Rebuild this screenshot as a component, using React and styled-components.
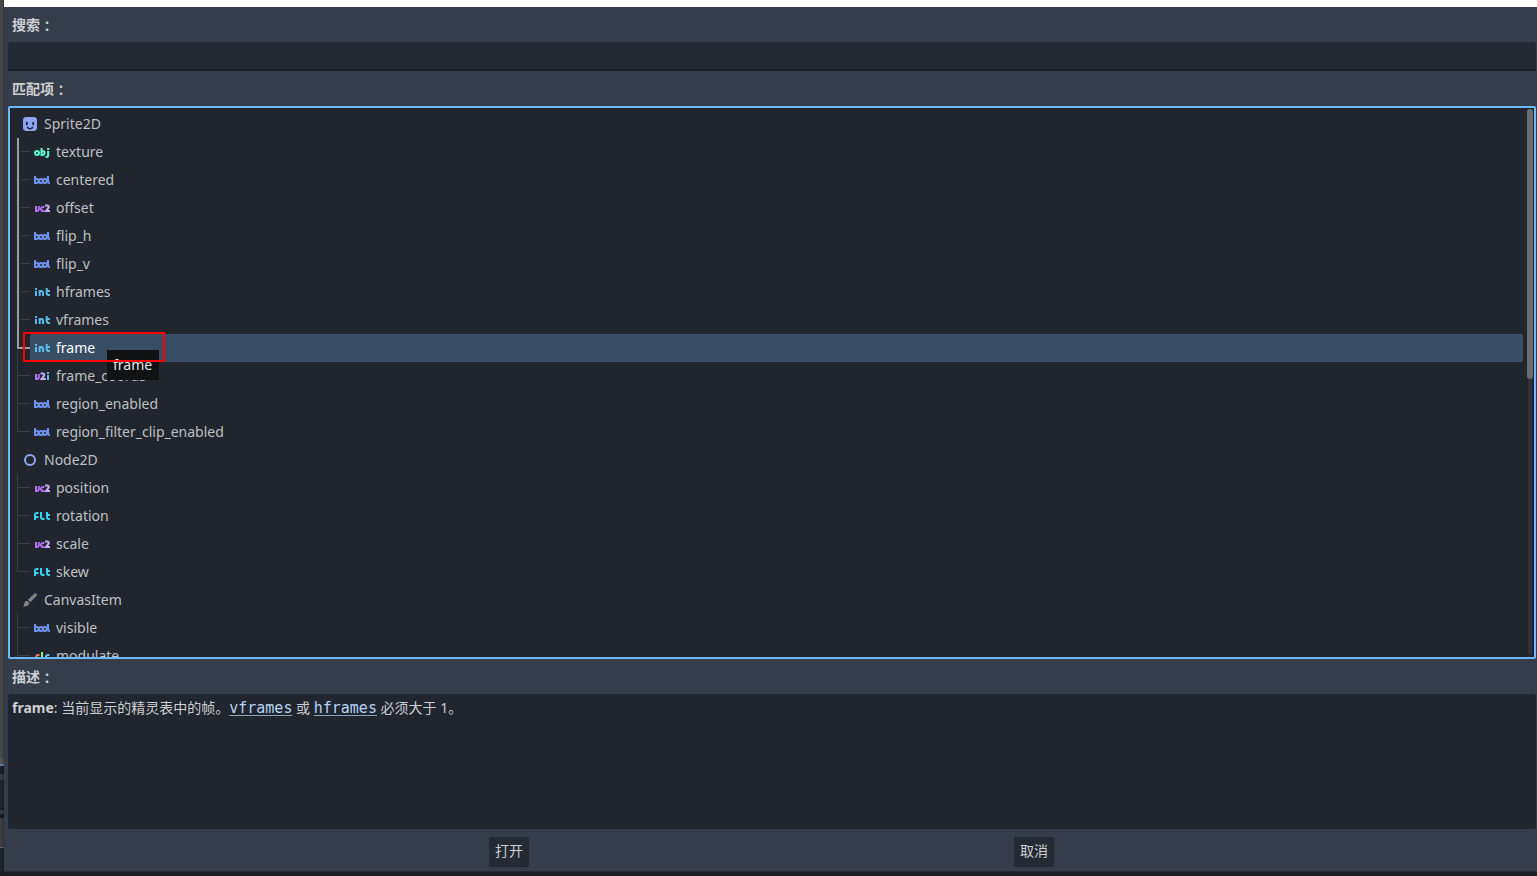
import React from 'react';
import styled, { createGlobalStyle } from 'styled-components';

const GlobalStyle = createGlobalStyle`
  * {
    box-sizing: border-box;
  }
  body {
    margin: 0;
    overflow: hidden;
    background: #1b1e26;
    color: #cdcfd2;
    font-family: 'Noto Sans', 'Noto Sans CJK SC', sans-serif;
    font-size: 14px;
  }
`;

const purple = '#ac73f1';
const lilac = '#cba6f7';

const icons = {
  sprite: (
    <>
      <rect x="1" y="1" width="14" height="14" rx="3.4" fill="#8da5f3" />
      <path d="M4.800 6.800v1.400M11.200 6.800v1.400" stroke="#21252e" strokeWidth="1.9" strokeLinecap="round" />
      <path d="M5.500 11.200c.4 1.100 1.300 1.500 2.500 1.500s2.100-.4 2.500-1.500" fill="none" stroke="#21252e" strokeWidth="1.5" strokeLinecap="round" />
    </>
  ),
  node: <circle cx="8" cy="8" r="5" fill="none" stroke="#8da5f3" strokeWidth="2" />,
  brush: (
    <g fill="#848484">
      <path d="M12.2 1.7a1.6 1.6 0 0 1 2.3 2.3L8.3 10.2 5.9 7.8z" />
      <path d="M5.1 8.800l2.300 2.300c-.2 2.400-3 3.700-6.400 3.600 1.300-1 .9-2.200 1.500-3.900.5-1.200 1.400-1.900 2.600-2z" />
    </g>
  ),
  obj: (
    <g fill="none" stroke="#5ff2d2" strokeWidth="2.1">
      <circle cx="3" cy="9" r="2" />
      <path d="M7.500 4v7h1a2 2 0 0 0 0-4h-1" />
      <path d="M14.200 4v2M14.200 7v4a2 2 0 0 1-2 2h-.7" />
    </g>
  ),
  bool: (
    <g fill="none" stroke="#6f91f0" strokeWidth="2.1">
      <path d="M1 4v7h1.600a2 2 0 0 0 0-4H1" />
      <circle cx="7" cy="9" r="2" />
      <circle cx="10.900" cy="9" r="2" />
      <path d="M14 4v5a2 2 0 0 0 2 2" />
    </g>
  ),
  int: (
    <path
      fill="#5abbef"
      d="M1 4v2h2V4zm0 3v5h2V7zm10.700-3v5a3 3 0 0 0 3 3H16v-2h-1.300a1 1 0 0 1-1-1V8H16V6h-2.300V4zM4.700 12h2V8h.3a1 1 0 0 1 1 1v3h2V9a3 3 0 0 0-3-3H4.700z"
    />
  ),
  flt: (
    <path
      fill="#35d4f4"
      d="M3 4a3 3 0 0 0-3 3v5h2v-2h2.500V8H2V7a1 1 0 0 1 1-1h1.500V4zM6 4v5a3 3 0 0 0 3 3h1.500v-2H9a1 1 0 0 1-1-1V4zM12 4v5a3 3 0 0 0 3 3h1v-2h-1a1 1 0 0 1-1-1V8h2V6h-2V4z"
    />
  ),
  vc2: (
    <>
      <path fill={purple} d="M1 6v6h1.800a3 3 0 0 0 3-3V6h-2v3a1 1 0 0 1-.8 1V6zM9 6a3 3 0 0 0 0 6h1.400v-2H9a1 1 0 0 1 0-2h1.400V6z" />
      <path d="M11 5.500h2.200a1.500 1.500 0 0 1 1.200 2.400L12.200 11H16" fill="none" stroke={lilac} strokeWidth="2.100" />
    </>
  ),
  v2i: (
    <>
      <path fill={purple} d="M1 6v6h1.800a3 3 0 0 0 3-3V6h-2v3a1 1 0 0 1-.8 1V6z" />
      <path d="M6.500 5.500h2.200a1.500 1.500 0 0 1 1.200 2.400L7.700 11h4.300" fill="none" stroke={lilac} strokeWidth="2.100" />
      <path d="M13 4v2h2V4zm0 3v5h2V7z" fill="#5abbef" />
    </>
  ),
  clr: (
    <g fill="none" strokeWidth="2">
      <path d="M5.500 7H4.200a2 2 0 0 0 0 4h1.300" stroke="#ff7070" />
      <path d="M8 4v5a2 2 0 0 0 2 2h.5" stroke="#7aff70" />
      <path d="M12 12V9a2 2 0 0 1 2-2h1.500" stroke="#70bafa" />
    </g>
  ),
};

const tree = [
  { name: 'Sprite2D', icon: 'sprite', root: true },
  { name: 'texture', icon: 'obj', guide: 'lit' },
  { name: 'centered', icon: 'bool', guide: 'lit' },
  { name: 'offset', icon: 'vc2', guide: 'lit' },
  { name: 'flip_h', icon: 'bool', guide: 'lit' },
  { name: 'flip_v', icon: 'bool', guide: 'lit' },
  { name: 'hframes', icon: 'int', guide: 'lit' },
  { name: 'vframes', icon: 'int', guide: 'lit' },
  { name: 'frame', icon: 'int', guide: 'selected' },
  { name: 'frame_coords', icon: 'v2i', guide: 'dim' },
  { name: 'region_enabled', icon: 'bool', guide: 'dim' },
  { name: 'region_filter_clip_enabled', icon: 'bool', guide: 'last' },
  { name: 'Node2D', icon: 'node', root: true },
  { name: 'position', icon: 'vc2', guide: 'dim' },
  { name: 'rotation', icon: 'flt', guide: 'dim' },
  { name: 'scale', icon: 'vc2', guide: 'dim' },
  { name: 'skew', icon: 'flt', guide: 'last' },
  { name: 'CanvasItem', icon: 'brush', root: true },
  { name: 'visible', icon: 'bool', guide: 'dim' },
  { name: 'modulate', icon: 'clr', guide: 'dim' },
];

const dimLine = '#3a3e46';
const litLine = '#9c9ea1';

const guides = {
  lit: (
    <>
      <path d="M0 0h2v28H0z" fill={litLine} />
      <path d="M4 13h9v1H4z" fill={dimLine} />
    </>
  ),
  selected: (
    <>
      <path d="M0 0h2v13h11v2H0z" fill={litLine} />
      <path d="M0 17h1v11H0z" fill={dimLine} />
    </>
  ),
  dim: <path d="M0 0h1v13h12v1H1v14H0z" fill={dimLine} />,
  last: <path d="M0 0h1v13h12v1H0z" fill={dimLine} />,
};

function TreeItem({ item }) {
  const { name, icon, root, guide } = item;
  return (
    <Row>
      {!root && (
        <Guide width="13" height="28" shapeRendering="crispEdges">
          {guides[guide]}
        </Guide>
      )}
      <Cell $root={root} $selected={guide === 'selected'}>
        <Icon viewBox="0 0 16 16">{icons[icon]}</Icon>
        <Name>{name}</Name>
      </Cell>
    </Row>
  );
}

function Label({ children }) {
  return (
    <LabelText>
      <span>{children}</span>
      <Colon>：</Colon>
    </LabelText>
  );
}

export default function App() {
  return (
    <Screen>
      <GlobalStyle />
      <Backdrop />
      <Window>
        <TitleStrip />
        <Dialog>
          <Label>搜索</Label>
          <SearchInput />
          <Label>匹配项</Label>
          <TreeBox>
            <Rows>
              {tree.map((item) => (
                <TreeItem key={item.name} item={item} />
              ))}
            </Rows>
            <ScrollTrack>
              <ScrollGrabber />
            </ScrollTrack>
          </TreeBox>
          <Label>描述</Label>
          <Description>
            <b>frame</b>: 当前显示的精灵表中的帧。<Code>vframes</Code> 或 <Code>hframes</Code> 必须大于 1。
          </Description>
          <Buttons>
            <Button>打开</Button>
            <Button>取消</Button>
          </Buttons>
        </Dialog>
      </Window>
      <Tooltip>frame</Tooltip>
      <Highlight />
    </Screen>
  );
}

const Screen = styled.div`
  position: relative;
  display: flex;
  width: 1537px;
  height: 876px;
  overflow: hidden;
`;

const Backdrop = styled.div`
  width: 4px;
  background: linear-gradient(90deg, transparent 50%, rgba(0, 0, 0, 0.25)),
    linear-gradient(
      #484848 758px,
      #525252 758px 764px,
      #5a7fac 764px 766px,
      #1c1e27 766px 774px,
      #343945 774px 780px,
      #20252c 780px 808px,
      #1a1d24 808px 810px,
      #343945 810px 814px,
      #1a1d24 814px 818px,
      #3d3d3d 818px 847px,
      #606468 847px 848px,
      #1e2329 848px
    );
`;

const Window = styled.div`
  flex: 1;
  display: flex;
  flex-direction: column;
`;

const TitleStrip = styled.div`
  height: 7px;
  background: #fff;
`;

const Dialog = styled.div`
  height: 865px;
  display: flex;
  flex-direction: column;
  padding: 0 1px 0 4px;
  background: #363d4a;
  border-bottom: 1px solid #272c35;
`;

const LabelText = styled.div`
  display: flex;
  height: 35px;
  padding-left: 4px;
  line-height: 35px;
  font-weight: 700;
`;

const Colon = styled.span`
  padding-top: 1px;
  font-family: 'Noto Sans', 'Noto Sans CJK TC', sans-serif;
`;

const SearchInput = styled.div`
  height: 29px;
  background: #242a33;
  border-bottom: 2px solid #1b1f27;
  border-radius: 2px 2px 0 0;
`;

const TreeBox = styled.div`
  display: flex;
  height: 553px;
  padding-top: 2px;
  background: #21252e;
  border: 2px solid #70bafa;
  border-radius: 2px;
  overflow: hidden;
`;

const Rows = styled.div`
  flex: 1;
  padding-left: 7px;
`;

const Row = styled.div`
  display: flex;
  height: 28px;
`;

const Guide = styled.svg`
  flex: none;
`;

const Cell = styled.div`
  flex: 1;
  display: flex;
  align-items: center;
  gap: 6px;
  padding-left: ${(props) => (props.$root ? 5 : 4)}px;
  border-radius: 2px;
  background: ${(props) => (props.$selected ? '#384e64' : 'none')};
  color: ${(props) => (props.$selected ? '#fff' : '#bfc1c4')};
`;

const Icon = styled.svg`
  flex: none;
  width: 16px;
  height: 16px;
`;

const Name = styled.span`
  height: 28px;
  line-height: 27px;
`;

const ScrollTrack = styled.div`
  display: flex;
  justify-content: center;
  width: 4px;
  height: 546px;
  margin: -1px 2px 0 5px;
  border-radius: 2px;
  background: #2f323b;
`;

const ScrollGrabber = styled.div`
  flex: none;
  width: 6px;
  height: 270px;
  border-radius: 3px;
  background: #6b6d72;
`;

const Description = styled.div`
  height: 135px;
  padding: 0 4px;
  line-height: 28px;
  background: #21252e;
  border-radius: 2px;
`;

const Code = styled.span`
  font-family: 'DejaVu Sans Mono', monospace;
  font-size: 15px;
  line-height: 1;
  color: #b5d6f5;
  text-decoration: underline 1px #8aa2bb;
  text-underline-offset: 2px;
`;

const Buttons = styled.div`
  display: flex;
  justify-content: space-between;
  padding: 8px 482px 0 481px;
`;

const Button = styled.div`
  width: 40px;
  height: 30px;
  line-height: 28px;
  text-align: center;
  background: #242a33;
  border-radius: 2px;
`;

const Tooltip = styled.div`
  position: absolute;
  left: 107px;
  top: 350px;
  width: 52px;
  height: 30px;
  padding-left: 6px;
  line-height: 30px;
  background: #101214;
  color: #e6e6e6;
`;

const Highlight = styled.div`
  position: absolute;
  left: 23px;
  top: 332px;
  width: 142px;
  height: 30px;
  border: 2px solid #f00;
`;
